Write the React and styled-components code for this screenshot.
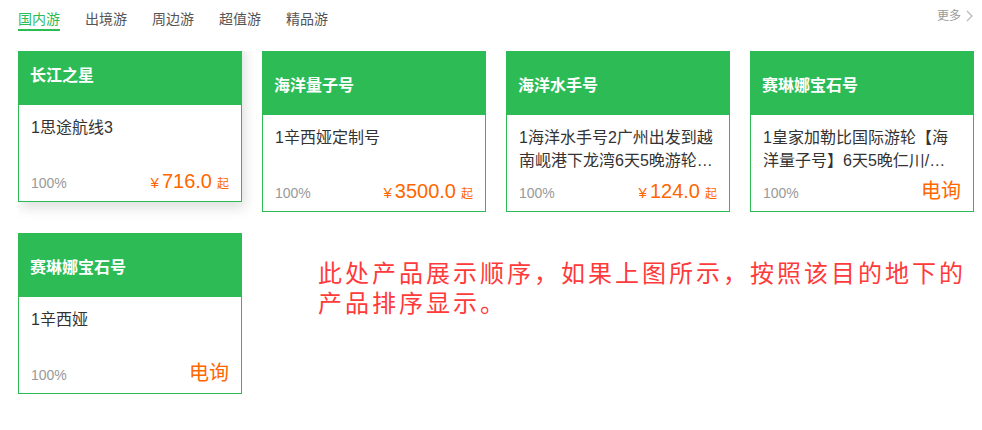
import React from 'react';
import styled, { createGlobalStyle } from 'styled-components';

const GlobalStyle = createGlobalStyle`
  body {
    margin: 0;
    background: #fff;
    font-family: "Liberation Sans", "Noto Sans CJK SC", sans-serif;
  }
`;

const Page = styled.div`
  width: 982px;
  box-sizing: border-box;
  padding: 0 8px 0 18px;
`;

const TabBar = styled.div`
  display: flex;
  align-items: flex-start;
  justify-content: space-between;
  padding-top: 10px;
`;

const Tabs = styled.div`
  display: flex;
  gap: 25px;
`;

const Tab = styled.div`
  font-size: 14px;
  line-height: 19px;
  color: ${({ active }) => (active ? '#2dbb55' : '#555')};
  border-bottom: 2px solid ${({ active }) => (active ? '#2dbb55' : 'transparent')};
  cursor: pointer;
`;

const More = styled.div`
  display: flex;
  align-items: center;
  gap: 4px;
  font-size: 12px;
  line-height: 16px;
  color: #999;
  margin-top: -2px;
`;

const Board = styled.div`
  margin-top: 20px;
  overflow: hidden;
  padding-bottom: 20px;
`;

const Grid = styled.div`
  display: grid;
  grid-template-columns: repeat(4, 224px);
  column-gap: 20px;
  row-gap: 21px;
`;

const Card = styled.div`
  display: flex;
  flex-direction: column;
  height: 161px;
  box-sizing: border-box;
  border: 1px solid #2dbb55;
  background: #fff;
  transform: ${({ lifted }) => (lifted ? 'translateY(-10px)' : 'none')};
  box-shadow: ${({ lifted }) => (lifted ? '3px 6px 12px rgba(0,0,0,0.13)' : 'none')};
`;

const CardHead = styled.div`
  height: 63px;
  flex-shrink: 0;
  display: flex;
  align-items: center;
  padding: 0 11px;
  background: #2dbb55;
  color: #fff;
  font-size: 16px;
  font-weight: bold;
`;

const CardBody = styled.div`
  flex: 1;
  min-height: 0;
  display: flex;
  flex-direction: column;
  padding: 11px 12px 10px;
`;

const Desc = styled.div`
  font-size: 16px;
  line-height: 23px;
  max-height: 46px;
  color: #333;
  display: -webkit-box;
  -webkit-line-clamp: 2;
  -webkit-box-orient: vertical;
  overflow: hidden;
`;

const Foot = styled.div`
  margin-top: auto;
  height: 20px;
  display: flex;
  justify-content: space-between;
  align-items: baseline;
  line-height: 20px;
  font-size: 14px;
`;

const Rate = styled.span`
  font-size: 14px;
  color: #999;
`;

const Price = styled.span`
  color: #ff6600;
  white-space: nowrap;
  font-size: 20px;
`;

const Yen = styled.span`
  font-size: 15px;
  margin-right: 3px;
`;

const Num = styled.span`
  font-size: 20px;
`;

const Unit = styled.span`
  font-size: 12px;
  margin-left: 5px;
`;

const Ask = styled.span`
  font-size: 20px;
  color: #ff6600;
`;

const Note = styled.div`
  grid-column: 2 / span 3;
  padding: 24px 0 0 56px;
  font-family: "Noto Sans CJK SC", serif;
  font-size: 24px;
  line-height: 30px;
  letter-spacing: 3px;
  color: #ff3a3a;
`;

const tabs = ['国内游', '出境游', '周边游', '超值游', '精品游'];

const products = [
  { title: '长江之星', desc: '1思途航线3', price: '716.0', lifted: true },
  { title: '海洋量子号', desc: '1辛西娅定制号', price: '3500.0' },
  { title: '海洋水手号', desc: '1海洋水手号2广州出发到越南岘港下龙湾6天5晚游轮航线', price: '124.0' },
  { title: '赛琳娜宝石号', desc: '1皇家加勒比国际游轮【海洋量子号】6天5晚仁川/济州航线' },
  { title: '赛琳娜宝石号', desc: '1辛西娅' },
];

const Chevron = () => (
  <svg width="9" height="12" viewBox="0 0 9 12" fill="none">
    <path d="M2 1l5 5-5 5" stroke="#bbb" strokeWidth="1.4" />
  </svg>
);

const ProductCard = ({ item }) => (
  <Card lifted={item.lifted}>
    <CardHead>{item.title}</CardHead>
    <CardBody>
      <Desc>{item.desc}</Desc>
      <Foot>
        <Rate>100%</Rate>
        {item.price ? (
          <Price>
            <Yen>¥</Yen>
            <Num>{item.price}</Num>
            <Unit>起</Unit>
          </Price>
        ) : (
          <Ask>电询</Ask>
        )}
      </Foot>
    </CardBody>
  </Card>
);

export default function App() {
  return (
    <>
      <GlobalStyle />
      <Page>
        <TabBar>
          <Tabs>
            {tabs.map((t, i) => (
              <Tab key={t} active={i === 0}>{t}</Tab>
            ))}
          </Tabs>
          <More>
            更多 <Chevron />
          </More>
        </TabBar>
        <Board>
          <Grid>
            {products.map((p, i) => (
              <ProductCard key={i} item={p} />
            ))}
            <Note>此处产品展示顺序，如果上图所示，按照该目的地下的产品排序显示。</Note>
          </Grid>
        </Board>
      </Page>
    </>
  );
}
